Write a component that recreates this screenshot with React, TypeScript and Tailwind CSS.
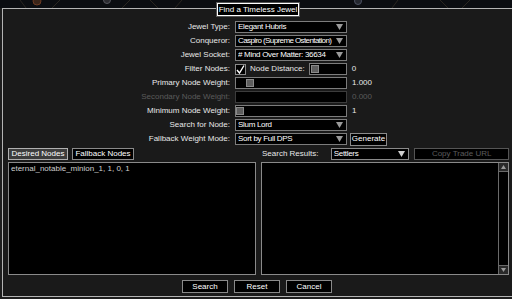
import React from "react";

const font = { fontFamily: '"Liberation Sans", Arial, sans-serif' };

const Arrow = ({ color = "#9a9a9a" }: { color?: string }) => (
    <svg width="7" height="6" viewBox="0 0 7 6" className="shrink-0">
        <path d="M0 0 H7 L3.5 6 Z" fill={color} />
    </svg>
);

interface DropProps {
    value: string;
    className: string;
    tight?: boolean;
}
const Dropdown: React.FC<DropProps> = ({ value, className, tight }: DropProps) => {
    return (
        <div className={"flex h-[12px] items-center gap-[1px] border border-[#7c7c7c] bg-black pl-[2px] pr-[3px] " + className}>
            <span className={"min-w-0 flex-1 overflow-hidden whitespace-nowrap leading-[10px] text-white " + (tight ? "tracking-[-0.6px]" : "tracking-[-0.3px]")}>
                {value}
            </span>
            <Arrow />
        </div>
    );
};

interface SliderProps {
    className: string;
    thumb?: number;
    disabled?: boolean;
}
const Slider: React.FC<SliderProps> = ({ className, thumb, disabled }: SliderProps) => {
    return (
        <div className={"relative h-[12px] border bg-black " + (disabled ? "border-[#3c3c3c] " : "border-[#7c7c7c] ") + className}>
            {thumb !== undefined && (
                <div
                    className="absolute top-[1px] bottom-[1px] w-[8px] border border-[#8a8a8a] bg-[#5e5e5e]"
                    style={{ left: thumb }}
                />
            )}
        </div>
    );
};

const Button = ({ label, className = "" }: { label: string; className?: string }) => (
    <div className={"flex h-[13px] items-center justify-center border border-[#8a8a8a] bg-black leading-[10px] text-white " + className}>
        {label}
    </div>
);

const Row = ({ label, children, dim }: { label: string; children: React.ReactNode; dim?: boolean }) => (
    <div className="flex h-[12px] items-center">
        <div className={"w-[227px] text-right leading-[12px] " + (dim ? "text-[#5a5a5a]" : "text-[#e8e8e8]")}>{label}</div>
        <div className="ml-[5px] flex items-center">{children}</div>
    </div>
);

const TreeStrip = () => (
    <svg width="512" height="8" viewBox="0 0 512 8" className="block">
        <rect width="512" height="8" fill="#0b0d11" />
        <g stroke="#2a2620" strokeWidth="1">
            <line x1="20" y1="0" x2="26" y2="8" />
            <line x1="60" y1="0" x2="52" y2="8" />
            <line x1="130" y1="0" x2="122" y2="8" />
            <line x1="150" y1="0" x2="158" y2="8" />
            <line x1="175" y1="8" x2="182" y2="0" />
            <line x1="398" y1="0" x2="392" y2="8" />
            <line x1="440" y1="0" x2="448" y2="8" />
            <line x1="462" y1="8" x2="470" y2="0" />
        </g>
        <circle cx="37" cy="1" r="4" fill="#3a2418" stroke="#6b3a22" />
        <circle cx="107" cy="0" r="3.5" fill="#2b2b30" stroke="#55555c" />
        <circle cx="358" cy="1" r="3.5" fill="#23262e" stroke="#4b5060" />
    </svg>
);

const App: React.FC = () => {
    return (
        <div className="relative h-[299px] w-[512px] overflow-hidden bg-[#1e1e1e] text-[8px]" style={font}>
            <TreeStrip />
            <div className="relative ml-[2px] flex h-[289px] w-[512px] flex-col border border-[#b4b4b4] bg-[#1a1a1a]">
                <div className="absolute left-[214px] top-[-6px] flex h-[13px] w-[82px] items-center justify-center border border-white bg-black leading-[10px] text-white outline outline-1 outline-[#555]">
                    Find a Timeless Jewel
                </div>

                <div className="mt-[12px] flex flex-col gap-[2px]">
                    <Row label="Jewel Type:">
                        <Dropdown value="Elegant Hubris" className="w-[112px]" />
                    </Row>
                    <Row label="Conqueror:">
                        <Dropdown value="Caspiro (Supreme Ostentation)" className="w-[112px]" tight />
                    </Row>
                    <Row label="Jewel Socket:">
                        <Dropdown value="# Mind Over Matter: 36634" className="w-[112px]" />
                    </Row>
                    <Row label="Filter Nodes:">
                        <div className="flex h-[11px] w-[11px] items-center justify-center border border-[#8a8a8a] bg-black">
                            <svg width="9" height="9" viewBox="0 0 9 9">
                                <path d="M1 5 L3.5 8 L8 0.5" stroke="white" strokeWidth="1.4" fill="none" />
                            </svg>
                        </div>
                        <span className="ml-[4px] leading-[12px] text-[#e8e8e8]">Node Distance:</span>
                        <Slider className="ml-[4px] w-[38px]" thumb={1} />
                        <span className="ml-[5px] text-[#e8e8e8]">0</span>
                    </Row>
                    <Row label="Primary Node Weight:">
                        <Slider className="w-[112px]" thumb={10} />
                        <span className="ml-[5px] text-[#e8e8e8]">1.000</span>
                    </Row>
                    <Row label="Secondary Node Weight:" dim>
                        <Slider className="w-[112px]" disabled />
                        <span className="ml-[5px] text-[#5a5a5a]">0.000</span>
                    </Row>
                    <Row label="Minimum Node Weight:">
                        <Slider className="w-[112px]" thumb={0} />
                        <span className="ml-[5px] text-[#e8e8e8]">1</span>
                    </Row>
                    <Row label="Search for Node:">
                        <Dropdown value="Slum Lord" className="w-[112px]" />
                    </Row>
                    <Row label="Fallback Weight Mode:">
                        <Dropdown value="Sort by Full DPS" className="w-[112px]" />
                        <Button label="Generate" className="ml-[3px] h-[12px] w-[37px]" />
                    </Row>
                </div>

                <div className="mt-[3px] flex gap-[5px] pl-[5px]">
                    <div className="flex w-[248px] flex-col">
                        <div className="flex h-[12px] gap-[4px]">
                            <div className="flex h-[12px] w-[60px] items-center justify-center border border-[#b0b0b0] bg-[#3c3c3c] leading-[10px] text-white">
                                Desired Nodes
                            </div>
                            <div className="flex h-[12px] w-[62px] items-center justify-center border border-[#8a8a8a] bg-black leading-[10px] text-white">
                                Fallback Nodes
                            </div>
                        </div>
                        <div className="mt-[2px] h-[113px] border border-[#8a8a8a] bg-black px-[2px] py-[1px] leading-[10px] text-[#cfcfcf]">
                            eternal_notable_minion_1, 1, 0, 1
                        </div>
                    </div>
                    <div className="flex w-[248px] flex-col">
                        <div className="flex h-[12px] items-center">
                            <span className="w-[70px] pl-[1px] text-[#e8e8e8]">Search Results:</span>
                            <div className="flex h-[12px] w-[79px] items-center justify-between border border-[#8a8a8a] bg-black pl-[2px] pr-[3px]">
                                <span className="leading-[10px] tracking-[-0.3px] text-white">Settlers</span>
                                <Arrow color="#d0d0d0" />
                            </div>
                            <div className="ml-[5px] flex h-[12px] w-[95px] items-center justify-center border border-[#555] bg-black leading-[10px] text-[#5c5c5c]">
                                Copy Trade URL
                            </div>
                        </div>
                        <div className="mt-[2px] flex h-[113px] border border-[#8a8a8a] bg-black">
                            <div className="flex-1" />
                            <div className="flex w-[10px] flex-col justify-between border-l border-[#6a6a6a]">
                                <div className="flex h-[9px] items-center justify-center border-b border-[#6a6a6a] bg-[#2a2a2a]">
                                    <svg width="5" height="4" viewBox="0 0 5 4">
                                        <path d="M0 4 H5 L2.5 0 Z" fill="#9a9a9a" />
                                    </svg>
                                </div>
                                <div className="flex h-[9px] items-center justify-center border-t border-[#6a6a6a] bg-[#2a2a2a]">
                                    <svg width="5" height="4" viewBox="0 0 5 4">
                                        <path d="M0 0 H5 L2.5 4 Z" fill="#9a9a9a" />
                                    </svg>
                                </div>
                            </div>
                        </div>
                    </div>
                </div>

                <div className="mt-[5px] flex justify-center gap-[6px] pr-[2px]">
                    <Button label="Search" className="w-[46px]" />
                    <Button label="Reset" className="w-[46px]" />
                    <Button label="Cancel" className="w-[46px]" />
                </div>
            </div>
        </div>
    );
};

export default App;
